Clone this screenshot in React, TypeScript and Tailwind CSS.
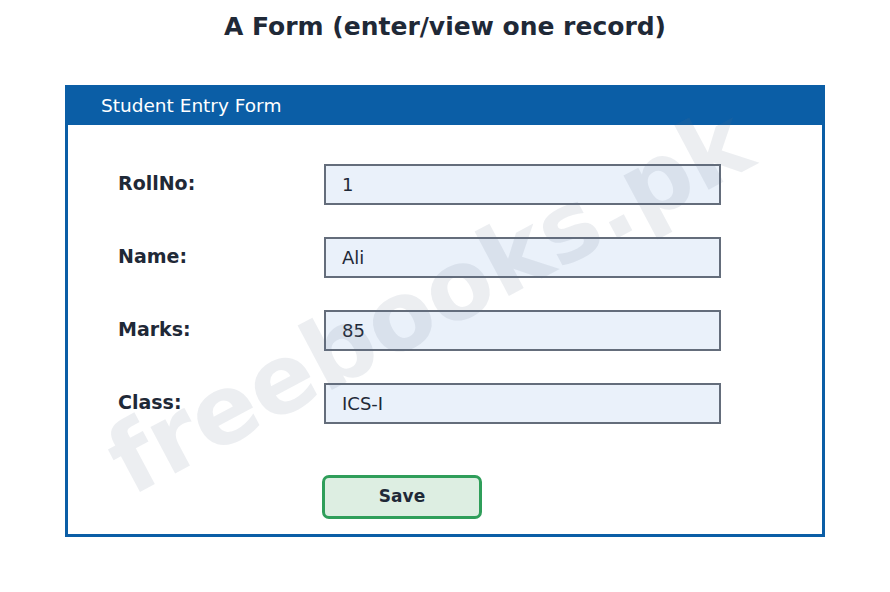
import React from "react";

const fields = [
  { label: "RollNo:", value: "1" },
  { label: "Name:", value: "Ali" },
  { label: "Marks:", value: "85" },
  { label: "Class:", value: "ICS-I" },
];

const App = () => {
  return (
    <div className="relative w-[890px] h-[592px] overflow-hidden bg-white font-['DejaVu_Sans',sans-serif] text-[#1f2937]">
      <h1 className="pt-[11px] text-center text-[25px] leading-[32px] font-bold">
        A Form (enter/view one record)
      </h1>

      <div className="ml-[65px] mt-[42px] w-[760px] h-[452px] border-[3px] border-[#0b5ea6] flex flex-col">
        <div className="h-[37px] bg-[#0b5ea6] pl-[33px] flex items-center">
          <p className="text-[18.5px] text-white leading-none">Student Entry Form</p>
        </div>

        <div className="flex flex-col pl-[50px] pt-[39px] gap-[32px]">
          {fields.map((f) => (
            <div key={f.label} className="flex items-start">
              <span className="w-[206px] pt-[7px] text-[19px] leading-[24px] font-bold">
                {f.label}
              </span>
              <div className="w-[397px] h-[41px] border-2 border-[#646d7b] bg-[#eaf1fa] px-[16px] flex items-center text-[18px]">
                {f.value}
              </div>
            </div>
          ))}
        </div>

        <div className="pl-[254px] pt-[51px]">
          <button
            type="button"
            className="w-[160px] h-[44px] rounded-[7px] border-[3px] border-[#2f9e5a] bg-[#ddeee2] text-[17px] font-bold"
          >
            Save
          </button>
        </div>
      </div>

      {/* watermark laid over the form */}
      <div className="pointer-events-none absolute left-[429px] top-[301px] -translate-x-1/2 -translate-y-1/2 -rotate-[28deg] whitespace-nowrap text-[96px] font-bold leading-none text-[rgba(100,116,139,0.12)]">
        freebooks.pk
      </div>
    </div>
  );
};

export default App;
